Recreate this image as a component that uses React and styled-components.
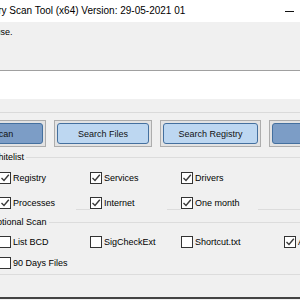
import styled, { createGlobalStyle } from "styled-components";

const GlobalStyle = createGlobalStyle`
  html, body {
    margin: 0;
    padding: 0;
    background: #f0f0f0;
    overflow: hidden;
  }
  body {
    font-family: "Liberation Sans", Arial, sans-serif;
    font-size: 9px;
    color: #000;
  }
`;

const whitelist = [
  { label: "Registry", checked: true },
  { label: "Services", checked: true },
  { label: "Drivers", checked: true },
  { label: "", hidden: true },
  { label: "Processes", checked: true },
  { label: "Internet", checked: true },
  { label: "One month", checked: true },
];

const optional = [
  { label: "List BCD", checked: false },
  { label: "SigCheckExt", checked: false },
  { label: "Shortcut.txt", checked: false },
  { label: "Addition.txt", checked: true },
  { label: "90 Days Files", checked: false },
];

function CheckBox({ label, checked, hidden }) {
  if (hidden) return <span />;
  return (
    <CheckItem>
      <Box>
        {checked && (
          <svg width="10" height="10" viewBox="0 0 10 10">
            <polyline
              points="1.5,5 4,7.5 8.8,1.8"
              fill="none"
              stroke="#3a3a3a"
              strokeWidth="1.4"
            />
          </svg>
        )}
      </Box>
      {label}
    </CheckItem>
  );
}

export default function App() {
  return (
    <>
      <GlobalStyle />
      <Window>
        <TitleBar>
          <AppIcon viewBox="0 0 14 14">
            <rect x="1" y="1" width="12" height="12" rx="2" fill="#2f6db5" />
            <path d="M4 4h6M4 7h6M4 10h4" stroke="#fff" strokeWidth="1.2" />
          </AppIcon>
          <Title>Farbar Recovery Scan Tool (x64) Version: 29-05-2021 01</Title>
          <CaptionButton>
            <Minimize />
          </CaptionButton>
          <CaptionButton />
          <CaptionButton />
        </TitleBar>

        <InfoPanel>For 32-bit systems please use.</InfoPanel>
        <LogBox />
        <Separator />

        <ButtonRow>
          <Button $width={86}>
            <ButtonFace $dark>Scan</ButtonFace>
          </Button>
          <Button $width={98}>
            <ButtonFace>Search Files</ButtonFace>
          </Button>
          <Button $width={101}>
            <ButtonFace>Search Registry</ButtonFace>
          </Button>
          <Button $width={86}>
            <ButtonFace $dark>Fix</ButtonFace>
          </Button>
        </ButtonRow>

        <Group $top={5} $pt={6} $pb={0}>
          <Legend>Whitelist</Legend>
          <Grid $rowGap={8} $overlap>
            {whitelist.map((item, i) => (
              <CheckBox key={i} {...item} />
            ))}
          </Grid>
        </Group>

        <Group $top={7} $pt={5} $pb={3}>
          <Legend>Optional Scan</Legend>
          <Grid $rowGap={4}>
            {optional.map((item, i) => (
              <CheckBox key={i} {...item} />
            ))}
          </Grid>
        </Group>

        <BottomEdge />
      </Window>
    </>
  );
}

const Window = styled.div`
  width: 494px;
  margin-left: -120px;
  display: flex;
  flex-direction: column;
`;

const TitleBar = styled.div`
  height: 22px;
  background: #fff;
  display: flex;
  align-items: center;
  padding-left: 30px;
`;

const AppIcon = styled.svg`
  width: 14px;
  height: 14px;
  flex: none;
`;

const Title = styled.span`
  flex: 1;
  margin-left: 8px;
  font-size: 10px;
  line-height: 12px;
  white-space: nowrap;
`;

const CaptionButton = styled.div`
  width: 34px;
  height: 22px;
  flex: none;
  display: flex;
  align-items: center;
  justify-content: center;
`;

const Minimize = styled.span`
  width: 9px;
  height: 1px;
  background: #111;
`;

const InfoPanel = styled.div`
  height: 48px;
  box-sizing: border-box;
  padding: 5px 0 0 10px;
  line-height: 11px;
  white-space: nowrap;
`;

const LogBox = styled.div`
  height: 29px;
  box-sizing: border-box;
  border-top: 1px solid #a0a0a0;
  background: #fff;
`;

const Separator = styled.div`
  margin-top: 13px;
  height: 1px;
  background: #dadada;
`;

const ButtonRow = styled.div`
  display: flex;
  gap: 8px;
  margin-top: 7px;
  padding-left: 80px;
`;

const Button = styled.div`
  width: ${(p) => p.$width}px;
  height: 27px;
  box-sizing: border-box;
  flex: none;
  padding: 2px;
  border: 1px solid #adadad;
  background: #e3e3e3;
`;

const ButtonFace = styled.div`
  height: 100%;
  box-sizing: border-box;
  display: flex;
  align-items: center;
  justify-content: center;
  border: 1px solid #44709f;
  border-radius: 3px;
  background: ${(p) => (p.$dark ? "#7c9dc6" : "#bdd7f1")};
  color: #111;
  white-space: nowrap;
`;

const Group = styled.fieldset`
  margin: ${(p) => p.$top}px 0 0 104px;
  min-width: 0;
  width: 420px;
  border: 1px solid #dcdcdc;
  padding: ${(p) => p.$pt}px 0 ${(p) => p.$pb}px 14px;
`;

const Legend = styled.legend`
  margin-left: -11px;
  padding: 0 2px;
  line-height: 11px;
  color: #000;
`;

const Grid = styled.div`
  display: grid;
  grid-template-columns: 91px 91px 103px 91px;
  row-gap: ${(p) => p.$rowGap}px;
  margin-bottom: ${(p) => (p.$overlap ? -2 : 0)}px;
`;

const CheckItem = styled.label`
  width: 77px;
  height: 17px;
  display: flex;
  align-items: center;
  gap: 2px;
  background: #f0f0f0;
  white-space: nowrap;
`;

const Box = styled.span`
  width: 12px;
  height: 12px;
  box-sizing: border-box;
  flex: none;
  display: flex;
  align-items: center;
  justify-content: center;
  border: 1px solid #333;
  background: #fff;
`;

const BottomEdge = styled.div`
  margin-top: 22px;
  height: 2px;
  background: #444;
`;
